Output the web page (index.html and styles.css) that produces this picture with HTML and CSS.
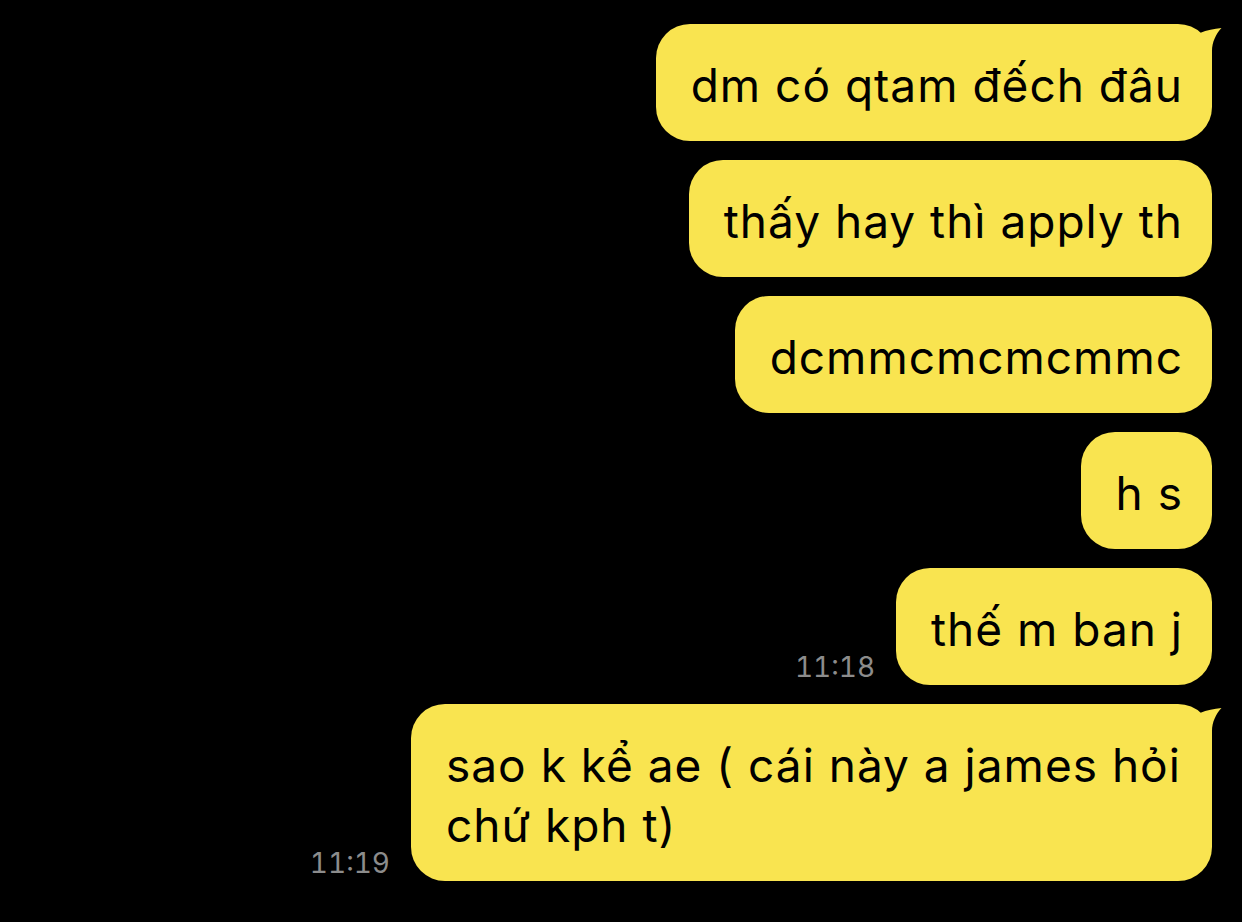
FILE: index.html
```html
<!DOCTYPE html>
<html lang="vi">
<head>
<meta charset="utf-8">
<title>Chat</title>
<link rel="stylesheet" href="styles.css">
</head>
<body>
<main class="chat">
  <div class="row">
    <div class="bubble">dm có qtam đếch đâu<svg class="tail" width="26" height="36" viewBox="0 0 26 36"><path d="M0 14 L4 9 C11 6 18 5 25.5 4 C20 10 16 18 16 27 L16 36 L0 36 Z" fill="#F9E450"/></svg></div>
  </div>
  <div class="row">
    <div class="bubble">thấy hay thì apply th</div>
  </div>
  <div class="row">
    <div class="bubble">dcmmcmcmcmmc</div>
  </div>
  <div class="row">
    <div class="bubble">h s</div>
  </div>
  <div class="row">
    <span class="time">11:18</span>
    <div class="bubble">thế m ban j</div>
  </div>
  <div class="row">
    <span class="time">11:19</span>
    <div class="bubble bubble-wide">sao k kể ae ( cái này a james hỏi chứ kph t)<svg class="tail" width="26" height="36" viewBox="0 0 26 36"><path d="M0 14 L4 9 C11 6 18 5 25.5 4 C20 10 16 18 16 27 L16 36 L0 36 Z" fill="#F9E450"/></svg></div>
  </div>
</main>
</body>
</html>
```

FILE: styles.css
```css
* {
  box-sizing: border-box;
}

html, body {
  margin: 0;
  padding: 0;
  background: #000;
}

body {
  width: 1242px;
  height: 922px;
  overflow: hidden;
  font-family: Inter, Roboto, "Liberation Sans", sans-serif;
}

.chat {
  display: flex;
  flex-direction: column;
  align-items: flex-end;
  gap: 19px;
  padding: 24px 30px 0 0;
}

.row {
  display: flex;
  align-items: flex-end;
  gap: 21px;
}

.bubble {
  position: relative;
  background: #F9E450;
  color: #000;
  font-size: 46px;
  line-height: 60px;
  letter-spacing: 1px;
  padding: 31px 29px 26px 35px;
  border-radius: 34px;
}

.bubble-wide {
  max-width: 801px;
}

.tail {
  position: absolute;
  top: 0;
  right: -10px;
  display: block;
}

.time {
  color: #8c8c8c;
  font-size: 28px;
  line-height: 28px;
  font-variant-numeric: tabular-nums;
  padding-bottom: 4px;
}
```
